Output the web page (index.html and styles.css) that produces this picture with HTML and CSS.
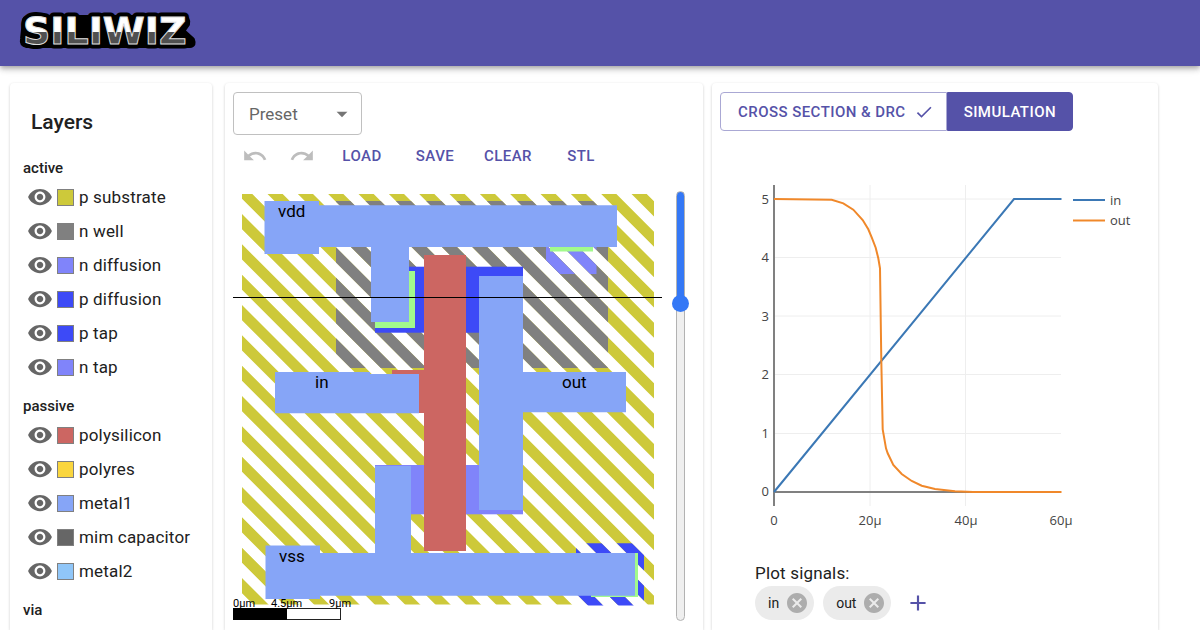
FILE: index.html
```html
<!DOCTYPE html>
<html lang="en">
<head>
<meta charset="utf-8">
<meta name="viewport" content="width=device-width, initial-scale=1">
<title>SiliWiz</title>
<link rel="stylesheet" href="styles.css">
</head>
<body>
<svg class="sprite" aria-hidden="true">
  <symbol id="eye" viewBox="0 0 24 24"><path d="M12 4.5C7 4.5 2.73 7.61 1 12c1.73 4.39 6 7.5 11 7.5s9.27-3.11 11-7.5c-1.73-4.39-6-7.5-11-7.5zM12 17c-2.76 0-5-2.24-5-5s2.24-5 5-5 5 2.24 5 5-2.24 5-5 5zm0-8c-1.66 0-3 1.34-3 3s1.34 3 3 3 3-1.34 3-3-1.34-3-3-3z"/></symbol>
  <symbol id="undo" viewBox="0 0 24 24"><path d="M12.5 8c-2.65 0-5.05.99-6.9 2.6L2 7v9h9l-3.62-3.62c1.39-1.16 3.16-1.88 5.12-1.88 3.54 0 6.55 2.31 7.6 5.5l2.37-.78C21.08 11.03 17.15 8 12.5 8z"/></symbol>
  <symbol id="redo" viewBox="0 0 24 24"><path d="M18.4 10.6C16.55 8.99 14.15 8 11.5 8c-4.65 0-8.58 3.03-9.96 7.22L3.9 16c1.05-3.19 4.05-5.5 7.6-5.5 1.95 0 3.73.72 5.12 1.88L13 16h9V7l-3.6 3.6z"/></symbol>
  <symbol id="check" viewBox="0 0 24 24"><path d="M9 16.17 4.83 12l-1.42 1.41L9 19 21 7l-1.41-1.41z"/></symbol>
  <symbol id="cancel" viewBox="0 0 24 24"><path d="M12 2C6.47 2 2 6.47 2 12s4.47 10 10 10 10-4.47 10-10S17.53 2 12 2zm5 13.59L15.59 17 12 13.41 8.41 17 7 15.59 10.59 12 7 8.41 8.41 7 12 10.59 15.59 7 17 8.41 13.41 12 17 15.59z"/></symbol>
  <symbol id="add" viewBox="0 0 24 24"><path d="M19 13h-6v6h-2v-6H5v-2h6V5h2v6h6v2z"/></symbol>
</svg>

<header class="app-bar">
  <svg class="logo" viewBox="0 0 180 38" role="img" aria-label="SiliWiz">
    <defs>
      <linearGradient id="chrome" x1="0" y1="0" x2="0" y2="1">
        <stop offset="0" stop-color="#fff"/><stop offset="0.52" stop-color="#fff"/>
        <stop offset="0.52" stop-color="#505050"/><stop offset="1" stop-color="#505050"/>
      </linearGradient>
    </defs>
    <path class="logo-back" d="M6 6Q7 4 11 4H164Q169 4 168 10L163 17L173 26Q175 31 171 31H8Q3 30 4 25Z"/>
    <text class="logo-text logo-halo" x="4" y="30">SILIWIZ</text>
    <text class="logo-text logo-face" x="4" y="30" aria-hidden="true">SILIWIZ</text>
  </svg>
</header>

<main class="workspace">
  <section class="card layers">
    <h2 class="layers-title">Layers</h2>
    <h3 class="group-title">active</h3>
    <ul class="layer-list">
      <li class="layer"><button class="eye" aria-label="Toggle p substrate"><svg><use href="#eye"/></svg></button><span class="swatch substrate"></span>p substrate</li>
      <li class="layer"><button class="eye" aria-label="Toggle n well"><svg><use href="#eye"/></svg></button><span class="swatch nwell"></span>n well</li>
      <li class="layer"><button class="eye" aria-label="Toggle n diffusion"><svg><use href="#eye"/></svg></button><span class="swatch ndiff"></span>n diffusion</li>
      <li class="layer"><button class="eye" aria-label="Toggle p diffusion"><svg><use href="#eye"/></svg></button><span class="swatch pdiff"></span>p diffusion</li>
      <li class="layer"><button class="eye" aria-label="Toggle p tap"><svg><use href="#eye"/></svg></button><span class="swatch pdiff"></span>p tap</li>
      <li class="layer"><button class="eye" aria-label="Toggle n tap"><svg><use href="#eye"/></svg></button><span class="swatch ndiff"></span>n tap</li>
    </ul>
    <h3 class="group-title">passive</h3>
    <ul class="layer-list">
      <li class="layer"><button class="eye" aria-label="Toggle polysilicon"><svg><use href="#eye"/></svg></button><span class="swatch poly"></span>polysilicon</li>
      <li class="layer"><button class="eye" aria-label="Toggle polyres"><svg><use href="#eye"/></svg></button><span class="swatch polyres"></span>polyres</li>
      <li class="layer"><button class="eye" aria-label="Toggle metal1"><svg><use href="#eye"/></svg></button><span class="swatch metal1"></span>metal1</li>
      <li class="layer"><button class="eye" aria-label="Toggle mim capacitor"><svg><use href="#eye"/></svg></button><span class="swatch mim"></span>mim capacitor</li>
      <li class="layer"><button class="eye" aria-label="Toggle metal2"><svg><use href="#eye"/></svg></button><span class="swatch metal2"></span>metal2</li>
    </ul>
    <h3 class="group-title">via</h3>
  </section>

  <section class="card editor">
    <div class="preset">
      <select class="preset-select" aria-label="Preset"><option>Preset</option></select>
      <svg class="preset-arrow" viewBox="0 0 24 24" aria-hidden="true"><path d="M7 10l5 5 5-5z"/></svg>
    </div>
    <div class="toolbar">
      <button class="icon-button" disabled aria-label="Undo"><svg><use href="#undo"/></svg></button>
      <button class="icon-button" disabled aria-label="Redo"><svg><use href="#redo"/></svg></button>
      <button class="text-button">Load</button>
      <button class="text-button">Save</button>
      <button class="text-button">Clear</button>
      <button class="text-button">STL</button>
    </div>
    <div class="canvas-row">
      <svg class="canvas" viewBox="233 191 430 430" role="img" aria-label="Inverter layout">
        <defs>
          <clipPath id="c-sub"><rect x="242" y="194" width="412" height="410.5"/></clipPath>
          <clipPath id="c-well"><rect x="336" y="201" width="272" height="167"/></clipPath>
          <clipPath id="c-ntap"><rect x="546" y="240" width="50.500" height="34"/></clipPath>
          <clipPath id="c-ptap"><rect x="576" y="543.300" width="68" height="62.300"/></clipPath>
          <line id="hatch" x1="17.900" y1="824.100" x2="1017.900" y2="-175.900" stroke-width="1400" stroke-dasharray="10.725 10.725"/>
        </defs>
        <g clip-path="url(#c-sub)"><use href="#hatch" class="s-substrate"/></g>
        <g clip-path="url(#c-well)"><use href="#hatch" class="s-nwell"/></g>
        <g clip-path="url(#c-ntap)"><use href="#hatch" class="s-ndiff"/></g>
        <g clip-path="url(#c-ptap)"><use href="#hatch" class="s-pdiff"/></g>
        <rect class="f-pdiff" x="375" y="266.700" width="148" height="66"/>
        <rect class="f-ndiff" x="375" y="465" width="148" height="49.300"/>
        <path class="f-poly" d="M424 255H466V551H424V413H392V370H424Z"/>
        <g class="f-contact">
          <rect x="375" y="271" width="40" height="57"/>
          <rect x="550" y="240" width="43" height="11.500"/>
          <rect x="591" y="553" width="47" height="44"/>
        </g>
        <g class="f-metal1">
          <path d="M264.500 201H319V205.300H617V247H409V322H371V247H319V254H264.500Z"/>
          <path d="M275 372H370V374H419V413.300H275Z"/>
          <path d="M479 276H523V372H626V412.300H523V510H479Z"/>
          <path d="M375 466H411V553H635V595.700H320V599H265.500V545.500H320V553H375Z"/>
        </g>
        <g class="pin-label">
          <text x="278" y="217">vdd</text>
          <text x="315" y="388">in</text>
          <text x="562" y="388">out</text>
          <text x="279" y="562">vss</text>
        </g>
        <path class="cut-line" d="M233 297.500H662"/>
        <rect class="scale-box" x="233.500" y="608.500" width="107" height="11"/>
        <rect class="scale-fill" x="233" y="608" width="54" height="12"/>
        <g class="scale-label">
          <text x="233" y="607">0μm</text>
          <text x="271" y="607">4.5μm</text>
          <text x="329" y="607">9μm</text>
        </g>
      </svg>
      <input class="cut-slider" type="range" min="0" max="100" value="25" aria-label="Cross section position">
    </div>
  </section>

  <section class="card results">
    <div class="toggle-group">
      <button class="toggle">Cross section &amp; DRC <svg><use href="#check"/></svg></button>
      <button class="toggle toggle-on">Simulation</button>
    </div>
    <div class="plot-area">
      <svg class="plot" viewBox="755 180 385 350" role="img" aria-label="Simulation result">
        <path class="grid" d="M774 199H1061M774 257.500H1061M774 316H1061M774 374.500H1061M774 433.500H1061M870 185V506M965.500 185V506"/>
        <path class="axis" d="M774 185V506M774 492H1061"/>
        <polyline class="trace trace-in" points="774,492 1014,199 1061.500,199"/>
        <polyline class="trace trace-out" points="774,199 831.700,199.700 843.300,203.300 853.300,209.700 862.700,220 868.300,229.300 871.700,237.300 875.700,247.700 878.300,258.300 880,268.300 881.300,360 882.700,429.300 886,448.300 887.700,453.300 893.300,465 901.700,474 911.700,481 921.700,485.700 935,489 955,491.300 973,492 1061.500,492"/>
        <path class="trace trace-in" d="M1073 200H1105"/>
        <path class="trace trace-out" d="M1073 220.500H1105"/>
        <g class="tick tick-y">
          <text x="769" y="204">5</text><text x="769" y="262">4</text><text x="769" y="321">3</text>
          <text x="769" y="379">2</text><text x="769" y="438">1</text><text x="769" y="496">0</text>
        </g>
        <g class="tick tick-x">
          <text x="774" y="525">0</text><text x="870" y="525">20μ</text><text x="966" y="525">40μ</text><text x="1061" y="525">60μ</text>
        </g>
        <g class="tick"><text x="1110" y="205">in</text><text x="1110" y="225">out</text></g>
      </svg>
      <p class="signals-title">Plot signals:</p>
      <div class="signals">
        <span class="chip">in<button class="chip-remove" aria-label="Remove in"><svg><use href="#cancel"/></svg></button></span>
        <span class="chip">out<button class="chip-remove" aria-label="Remove out"><svg><use href="#cancel"/></svg></button></span>
        <button class="add" aria-label="Add signal"><svg><use href="#add"/></svg></button>
      </div>
    </div>
  </section>
</main>
</body>
</html>
```

FILE: styles.css
```css
* { box-sizing: border-box; }
body {
  margin: 0;
  min-height: 100vh;
  display: flex;
  flex-direction: column;
  background: #fff;
  color: #212121;
  font: 17px/24px Roboto, "Liberation Sans", sans-serif;
}
button {
  margin: 0;
  padding: 0;
  border: 0;
  background: none;
  font: inherit;
  color: inherit;
  cursor: pointer;
}
svg { display: block; fill: currentColor; }
h2, h3, p, ul { margin: 0; padding: 0; }
.sprite { position: absolute; width: 0; height: 0; }

.app-bar {
  padding: 14px 19px;
  background: #5552a8;
  box-shadow: 0 2px 4px -1px rgba(0,0,0,.2), 0 4px 5px rgba(0,0,0,.14), 0 1px 10px rgba(0,0,0,.12);
}
.logo { width: 180px; height: 38px; overflow: visible; }
.logo-back { fill: #000; stroke: #000; stroke-width: 6px; stroke-linejoin: round; }
.logo-text { font: bold 38px "DejaVu Sans", sans-serif; }
.logo-halo { fill: #000; stroke: #000; stroke-width: 9px; stroke-linejoin: round; }
.logo-face { fill: url(#chrome); stroke: #ddd; stroke-width: 1px; }

.workspace {
  flex: 1;
  display: grid;
  grid-template-columns: 206fr 478fr 446fr;
  gap: 9px;
  padding: 17px 42px 0 10px;
}
.card {
  min-width: 0;
  border-radius: 4px 4px 0 0;
  box-shadow: 0 1px 3px rgba(0,0,0,.2);
}

.layers { margin-right: 4px; padding: 25px 13px 8px; }
.layers-title { margin: 0 8px 20px; font-size: 21px; line-height: 28px; font-weight: 500; }
.group-title { font-size: 15px; line-height: 24px; font-weight: 500; }
.layer-list { margin-bottom: 10px; list-style: none; }
.layer { display: flex; align-items: center; height: 34px; padding-left: 4px; letter-spacing: .01em; white-space: nowrap; }
.eye { color: #666; }
.eye svg { width: 26px; height: 26px; }
.swatch { width: 17px; height: 17px; margin: 0 5px 0 4px; border: 1px solid #808080; }
.substrate { background: #cdc93a; }
.nwell { background: #808080; }
.ndiff { background: #8084fa; }
.pdiff { background: #3d4af7; }
.poly { background: #cc6662; }
.polyres { background: #fad63e; }
.metal1 { background: #86a5f7; }
.mim { background: #666; }
.metal2 { background: #90c6f8; }

.editor { padding: 9px 8px; }
.preset { display: grid; width: 129px; }
.preset > * { grid-area: 1 / 1; }
.preset-select {
  appearance: none;
  height: 43px;
  padding: 0 40px 0 15px;
  border: 1px solid #c0c0c0;
  border-radius: 4px;
  background: #fff;
  color: #666;
  font: inherit;
}
.preset-arrow { place-self: center end; width: 26px; height: 26px; margin-right: 7px; fill: #757575; pointer-events: none; }
.toolbar { display: flex; flex-wrap: wrap; align-items: center; gap: 5px; margin-bottom: 14px; padding-left: 1px; }
.icon-button { padding: 8px; color: #bdbdbd; }
.icon-button svg { width: 26px; height: 26px; }
.text-button { min-width: 68px; height: 42px; }
.text-button, .toggle {
  color: #5552a8;
  font-size: 15px;
  font-weight: 500;
  letter-spacing: .03em;
  text-transform: uppercase;
}
.canvas-row { display: flex; gap: 9px; }
.canvas { flex: 0 1 430px; min-width: 0; }
.s-substrate { stroke: #cdc93a; }
.s-nwell { stroke: #808080; }
.s-ndiff { stroke: #8084fa; }
.s-pdiff { stroke: #3d4af7; }
.f-ndiff { fill: #8084fa; }
.f-pdiff { fill: #3d4af7; }
.f-poly { fill: #cc6662; }
.f-contact { fill: #a2fa8c; }
.f-metal1 { fill: #86a5f7; }
.pin-label { fill: #000; font-size: 17px; }
.cut-line { stroke: #000; stroke-width: 1px; }
.scale-box { fill: #fff; stroke: #222; }
.scale-fill { fill: #000; }
.scale-label { fill: #000; font-size: 11px; }
.cut-slider {
  appearance: none;
  writing-mode: vertical-lr;
  width: 17px;
  height: auto;
  margin: 0;
  background: none;
}
.cut-slider::-webkit-slider-runnable-track {
  width: 9px;
  border: 1px solid #b2b2b2;
  border-radius: 5px;
  background: linear-gradient(#3478f6 26%, #efefef 26%);
}
.cut-slider::-webkit-slider-thumb {
  appearance: none;
  width: 17px;
  height: 17px;
  margin-left: -5px;
  border-radius: 50%;
  background: #3478f6;
}

.results { padding: 9px 8px; }
.toggle-group { display: flex; }
.toggle {
  display: flex;
  align-items: center;
  gap: 8px;
  height: 39px;
  padding: 0 12px 0 17px;
  border: 1px solid #aaa8d4;
  border-radius: 4px 0 0 4px;
  white-space: nowrap;
}
.toggle svg { width: 20px; height: 20px; }
.toggle-on {
  padding: 0 16px;
  border-color: #5552a8;
  border-radius: 0 4px 4px 0;
  background: #5552a8;
  color: #fff;
}
.plot-area { padding: 49px 10px 0 35px; }
.plot { width: 100%; max-width: 385px; overflow: visible; }
.plot path, .plot polyline { fill: none; }
.grid { stroke: #eee; }
.axis { stroke: #808080; stroke-width: 2px; }
.trace { stroke-width: 2px; }
.trace-in { stroke: #3b78b5; }
.trace-out { stroke: #f0882a; }
.tick { fill: #444; font: 13px "Open Sans", sans-serif; }
.tick-y { text-anchor: end; }
.tick-x { text-anchor: middle; }
.signals-title { margin-top: 31px; letter-spacing: .01em; }
.signals { display: flex; align-items: center; gap: 9px; margin-top: 1px; }
.chip { display: flex; align-items: center; gap: 6px; height: 34px; padding: 0 5px 0 13px; border-radius: 17px; background: #ebebeb; font-size: 14px; }
.chip-remove { color: #adadad; }
.chip-remove svg { width: 24px; height: 24px; }
.add { padding-left: 5px; color: #5552a8; }
.add svg { width: 26px; height: 26px; }
```
